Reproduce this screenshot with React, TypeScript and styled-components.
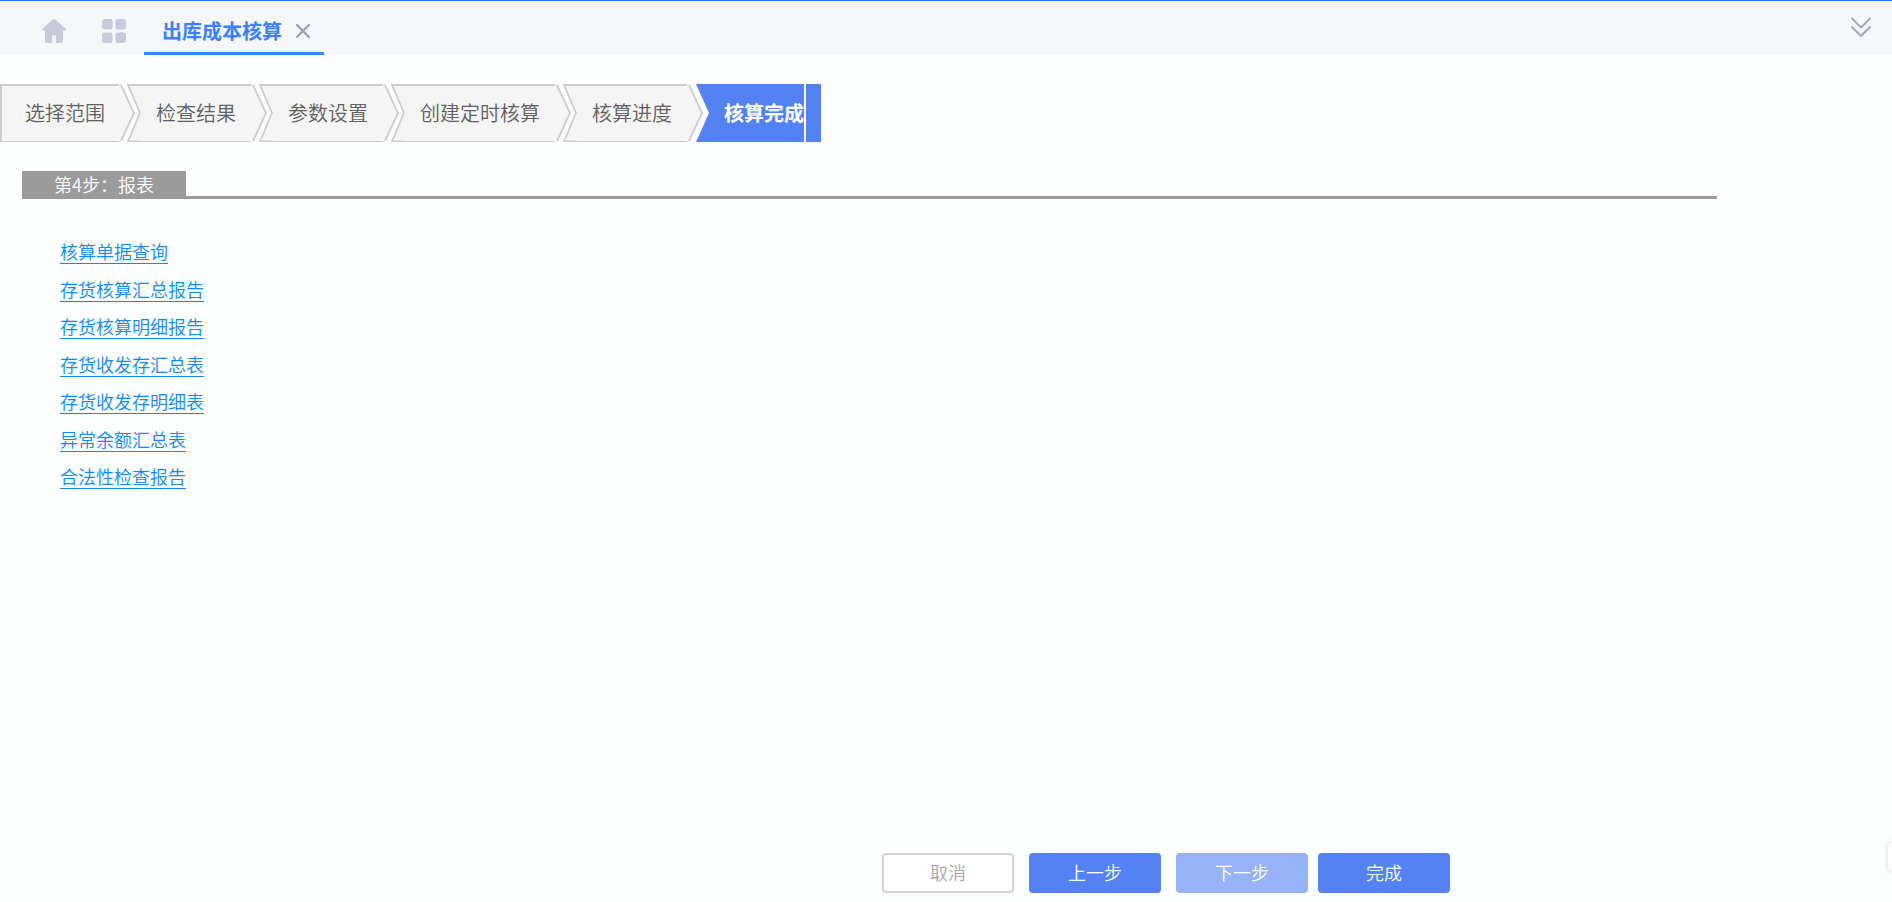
import React from 'react';
import styled, { createGlobalStyle, css } from 'styled-components';

const GlobalStyle = createGlobalStyle`
  * { box-sizing: border-box; }
  body {
    margin: 0;
    background: #fcfdff;
    font-family: "Noto Sans CJK SC", sans-serif;
    overflow: hidden;
  }
  button { font-family: inherit; cursor: pointer; }
`;

const Page = styled.div`
  min-height: 100vh;
  display: flex;
  flex-direction: column;
`;

const TopBar = styled.header`
  display: flex;
  align-items: stretch;
  height: 55px;
  padding: 0 20px 0 42px;
  border-top: 1px solid #2b6ff5;
  background: #f6f7fb;
`;

const IconButton = styled.button`
  display: flex;
  align-items: center;
  padding: 0;
  border: 0;
  background: none;
`;

const Shortcuts = styled.nav`
  display: flex;
  align-items: center;
  gap: 36px;
  padding: 6px 18px 0 0;
`;

const Tab = styled.div`
  display: flex;
  align-items: center;
  gap: 14px;
  width: 180px;
  padding: 8px 14px 0 18px;
  border-bottom: 3px solid #3a80ff;
`;

const TabLabel = styled.button`
  padding: 0;
  border: 0;
  background: none;
  color: #3a80ff;
  font-size: 20px;
  font-weight: 700;
  line-height: 30px;
  white-space: nowrap;
`;

const Collapse = styled(IconButton)`
  align-self: center;
  margin: 0 0 0 auto;
`;

const Steps = styled.ol`
  display: flex;
  height: 58px;
  margin: 29px 0;
  padding: 0;
  list-style: none;
`;

const Step = styled.li`
  display: flex;
`;

const StepLabel = styled.span<{ $state: 'first' | 'middle' | 'current' }>`
  padding: 0 15px;
  border-top: 2px solid #cccdcd;
  border-bottom: 1px solid #cccdcd;
  background: #f5f5f5;
  color: #606060;
  font-size: 20px;
  font-weight: 350;
  line-height: 54px;
  white-space: nowrap;
  ${({ $state }) => $state === 'first' && css`
    padding: 0 14px 0 23px;
    border-left: 2px solid #cccdcd;
  `}
  ${({ $state }) => $state === 'current' && css`
    padding: 0 0 0 15px;
    border-color: #5582f3;
    background: #5582f3;
    color: #fff;
    font-weight: 700;
  `}
`;

const StepEnd = styled.span`
  width: 15px;
  margin-left: 2px;
  background: #5582f3;
`;

const SectionHead = styled.div`
  display: flex;
  margin: 0 175px 0 22px;
  border-bottom: 3px solid #9b9b9b;
`;

const SectionTitle = styled.h2`
  width: 164px;
  height: 28px;
  margin: 0 0 -3px;
  background: #9b9b9b;
  color: #fff;
  font-size: 18px;
  font-weight: 350;
  line-height: 26px;
  text-align: center;
`;

const ReportList = styled.ul`
  display: flex;
  flex-direction: column;
  justify-content: space-between;
  align-items: flex-start;
  height: 250px;
  margin: 40px 0 0 60px;
  padding: 0;
  list-style: none;
`;

const ReportLink = styled.a`
  display: block;
  height: 25px;
  border-bottom: 1px solid #1189ee;
  color: #1189ee;
  font-size: 18px;
  font-weight: 350;
  line-height: 24px;
  text-decoration: none;
`;

const Footer = styled.footer`
  display: flex;
  justify-content: flex-end;
  gap: 10px;
  margin-top: auto;
  padding: 0 442px 9px 0;
`;

const FooterGroup = styled.div`
  display: flex;
  gap: 15px;
`;

const ActionButton = styled.button<{ $kind: 'plain' | 'primary' }>`
  width: 132px;
  height: 40px;
  padding: 0 0 2px;
  border: ${({ $kind }) => ($kind === 'plain' ? '2px solid #d4d5d7' : '0')};
  border-radius: 4px;
  background: ${({ $kind }) => ($kind === 'plain' ? '#fff' : '#5582f3')};
  color: ${({ $kind }) => ($kind === 'plain' ? '#a6a7a9' : '#fff')};
  font-size: 18px;
  font-weight: 350;
  line-height: 34px;
  &:disabled { background: #97b2f8; cursor: default; }
`;

const SideHandle = styled.button`
  position: fixed;
  right: -20px;
  bottom: 30px;
  width: 24px;
  height: 30px;
  padding: 0;
  border: 0;
  border-radius: 6px;
  background: #fff;
  box-shadow: 0 0 5px rgba(40, 50, 80, 0.2);
`;

const HomeIcon = () => (
  <svg width="24" height="24" viewBox="0 0 24 24" fill="#c8cadc" aria-hidden="true">
    <path d="M10.8.5a1.8 1.8 0 0 1 2.4 0l10.4 9.2c.8.8.4 1.8-.6 1.8h-2V22a2 2 0 0 1-2 2h-5v-6.2c0-1-.6-1.5-1.5-1.5h-1c-.9 0-1.500.5-1.500 1.500V24H5a2 2 0 0 1-2-2V11.500H1c-1 0-1.400-1-.6-1.800z" />
  </svg>
);

const AppsIcon = () => (
  <svg width="24" height="24" viewBox="0 0 24 24" fill="#c8cadc" aria-hidden="true">
    <path d="M3 0h5.500a2 2 0 0 1 2 2v6.500a2 2 0 0 1-2 2H3a3 3 0 0 1-3-3V3a3 3 0 0 1 3-3z" />
    <path d="M15.500 0H21a3 3 0 0 1 3 3v4.500a3 3 0 0 1-3 3h-5.500a2 2 0 0 1-2-2V2a2 2 0 0 1 2-2z" />
    <path d="M3 13.500h5.500a2 2 0 0 1 2 2V22a2 2 0 0 1-2 2H3a3 3 0 0 1-3-3v-4.500a3 3 0 0 1 3-3z" />
    <path d="M15.500 13.500H21a3 3 0 0 1 3 3V21a3 3 0 0 1-3 3h-5.500a2 2 0 0 1-2-2v-6.500a2 2 0 0 1 2-2z" />
  </svg>
);

const CloseIcon = () => (
  <svg width="14" height="14" viewBox="0 0 14 14" fill="none" stroke="#98a1b0" strokeWidth="2.200" strokeLinecap="round" aria-hidden="true">
    <path d="M1 1l12 12M13 1L1 13" />
  </svg>
);

const ChevronsIcon = () => (
  <svg width="22" height="22" viewBox="0 0 22 22" fill="none" stroke="#a0a8bf" strokeWidth="2" strokeLinecap="round" strokeLinejoin="round" aria-hidden="true">
    <path d="M2 1.500l9 9 9-9M2 10l9 9 9-9" />
  </svg>
);

const Divider = ({ active }: { active: boolean }) => (
  <svg width="22" height="58" viewBox="0 0 22 58" aria-hidden="true">
    <path d="M0 0H2L15.500 29L2 58H0z" fill="#f5f5f5" />
    <path d="M2 1L15 29L2 57" fill="none" stroke="#cccdcd" strokeWidth="1.800" />
    {active ? (
      <path d="M9 0H22V58H9L22 29z" fill="#5582f3" />
    ) : (
      <>
        <path d="M9 1H22V58H9L22 29z" fill="#f5f5f5" />
        <path d="M22 1H9L21 29L9 57.500H22" fill="none" stroke="#cccdcd" strokeWidth="1.800" />
      </>
    )}
  </svg>
);

const steps = ['选择范围', '检查结果', '参数设置', '创建定时核算', '核算进度', '核算完成'];

const reports = [
  '核算单据查询',
  '存货核算汇总报告',
  '存货核算明细报告',
  '存货收发存汇总表',
  '存货收发存明细表',
  '异常余额汇总表',
  '合法性检查报告',
];

export default function App() {
  const last = steps.length - 1;
  return (
    <Page>
      <GlobalStyle />
      <TopBar>
        <Shortcuts>
          <IconButton aria-label="首页"><HomeIcon /></IconButton>
          <IconButton aria-label="应用"><AppsIcon /></IconButton>
        </Shortcuts>
        <Tab>
          <TabLabel>出库成本核算</TabLabel>
          <IconButton aria-label="关闭"><CloseIcon /></IconButton>
        </Tab>
        <Collapse aria-label="展开"><ChevronsIcon /></Collapse>
      </TopBar>
      <main>
        <Steps>
          {steps.map((name, i) => (
            <Step key={name} aria-current={i === last ? 'step' : undefined}>
              <StepLabel $state={i === 0 ? 'first' : i === last ? 'current' : 'middle'}>{name}</StepLabel>
              {i < last ? <Divider active={i + 1 === last} /> : <StepEnd />}
            </Step>
          ))}
        </Steps>
        <SectionHead>
          <SectionTitle>第4步：报表</SectionTitle>
        </SectionHead>
        <ReportList>
          {reports.map((name) => (
            <li key={name}><ReportLink href="#">{name}</ReportLink></li>
          ))}
        </ReportList>
      </main>
      <Footer>
        <FooterGroup>
          <ActionButton $kind="plain">取消</ActionButton>
          <ActionButton $kind="primary">上一步</ActionButton>
          <ActionButton $kind="primary" disabled>下一步</ActionButton>
        </FooterGroup>
        <ActionButton $kind="primary">完成</ActionButton>
      </Footer>
      <SideHandle aria-label="侧栏" />
    </Page>
  );
}
